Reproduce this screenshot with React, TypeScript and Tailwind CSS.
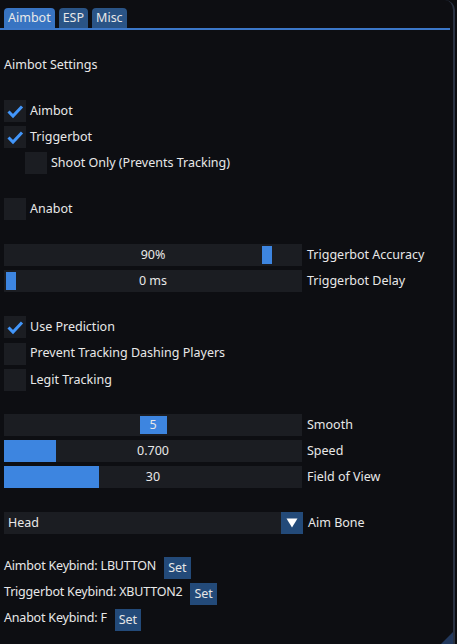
import React from 'react';

function Check({ on }: { on: boolean }) {
  return (
    <div className="w-[22px] h-[22px] bg-[#1b1d22] flex items-center justify-center shrink-0">
      {on && (
        <svg width="18" height="18" viewBox="0 0 18 18">
          <path d="M2.5 9.5 L7 14 L16 4.5" fill="none" stroke="#4296fa" strokeWidth="3" strokeLinecap="butt" strokeLinejoin="miter" />
        </svg>
      )}
    </div>
  );
}

function CheckRow({ label, on, indent }: { label: string; on: boolean; indent?: boolean }) {
  return (
    <div className={`flex items-center gap-[4px] h-[22px] ${indent ? 'pl-[21px]' : ''}`}>
      <Check on={on} />
      <span>{label}</span>
    </div>
  );
}

function SliderRow({ label, value, kind, pos, width }: { label: string; value: string; kind: 'grab' | 'fill'; pos: number; width: number }) {
  return (
    <div className="flex items-center h-[22px]">
      <div className="relative w-[298px] h-[22px] bg-[#1b1d22] flex items-center justify-center shrink-0">
        {kind === 'grab' && (
          <div className="absolute top-[2px] bottom-[2px] bg-[#3d85e0]" style={{ left: pos, width }} />
        )}
        {kind === 'fill' && (
          <div className="absolute top-0 bottom-0 left-0 bg-[#3d85e0]" style={{ width }} />
        )}
        <span className="relative">{value}</span>
      </div>
      <span className="ml-[5px]">{label}</span>
    </div>
  );
}

function Keybind({ label }: { label: string }) {
  return (
    <div className="flex items-start h-[22px]">
      <span className="leading-[18px] tracking-[-0.2px]">{label}</span>
      <button className="ml-[8px] h-[22px] px-[4px] bg-[#234a79] text-[#e6e6e6] leading-[22px]">Set</button>
    </div>
  );
}

export default function App() {
  return (
    <div className="w-[457px] h-[644px] bg-[#0c0d10] text-[#e8e8e8] text-[12.5px] overflow-hidden" style={{ fontFamily: '"Noto Sans", "Open Sans", sans-serif' }}>
      <div className="w-[455px] h-full border-r-2 border-[#2a3242] rounded-tr-[10px] bg-[#0d0e12] relative flex flex-col">
        <div className="pt-[8px] flex gap-[4px] pl-[4px] h-[28px]">
          <div className="bg-[#3874c2] rounded-t-[4px] px-[4px] h-[20px] leading-[20px]">Aimbot</div>
          <div className="bg-[#2a5486] rounded-t-[4px] px-[4px] h-[20px] leading-[20px]">ESP</div>
          <div className="bg-[#2a5486] rounded-t-[4px] px-[4px] h-[20px] leading-[20px]">Misc</div>
        </div>
        <div className="h-[2px] bg-[#3b77c8] mr-[3px]" />
        <div className="px-[4px] flex flex-col">
          <div className="mt-[26px] h-[18px] leading-[18px]">Aimbot Settings</div>
          <div className="mt-[26px] flex flex-col gap-[4px]">
            <CheckRow label="Aimbot" on />
            <CheckRow label="Triggerbot" on />
            <CheckRow label="Shoot Only (Prevents Tracking)" on={false} indent />
          </div>
          <div className="mt-[24px]">
            <CheckRow label="Anabot" on={false} />
          </div>
          <div className="mt-[24px] flex flex-col gap-[4px]">
            <SliderRow label="Triggerbot Accuracy" value="90%" kind="grab" pos={258} width={10} />
            <SliderRow label="Triggerbot Delay" value="0 ms" kind="grab" pos={2} width={10} />
          </div>
          <div className="mt-[24px] flex flex-col gap-[4.5px]">
            <CheckRow label="Use Prediction" on />
            <CheckRow label="Prevent Tracking Dashing Players" on={false} />
            <CheckRow label="Legit Tracking" on={false} />
          </div>
          <div className="mt-[23px] flex flex-col gap-[4px]">
            <SliderRow label="Smooth" value="5" kind="grab" pos={136} width={27} />
            <SliderRow label="Speed" value="0.700" kind="fill" pos={0} width={52} />
            <SliderRow label="Field of View" value="30" kind="fill" pos={0} width={95} />
          </div>
          <div className="mt-[24px] flex items-center h-[22px]">
            <div className="w-[277px] h-[22px] bg-[#1b1d22] pl-[4px] leading-[22px]">Head</div>
            <div className="w-[22px] h-[22px] bg-[#234a79] flex items-center justify-center">
              <svg width="12" height="10" viewBox="0 0 12 10">
                <path d="M0.5 0.5 H11.5 L6 9.5 Z" fill="#ffffff" />
              </svg>
            </div>
            <span className="ml-[5px]">Aim Bone</span>
          </div>
          <div className="mt-[23px] flex flex-col gap-[4px]">
            <Keybind label="Aimbot Keybind: LBUTTON" />
            <Keybind label="Triggerbot Keybind: XBUTTON2" />
            <Keybind label="Anabot Keybind: F" />
          </div>
        </div>
        <div className="absolute right-0 bottom-0 w-0 h-0 border-l-[12px] border-l-transparent border-b-[12px] border-b-[#22385c]" />
      </div>
    </div>
  );
}
